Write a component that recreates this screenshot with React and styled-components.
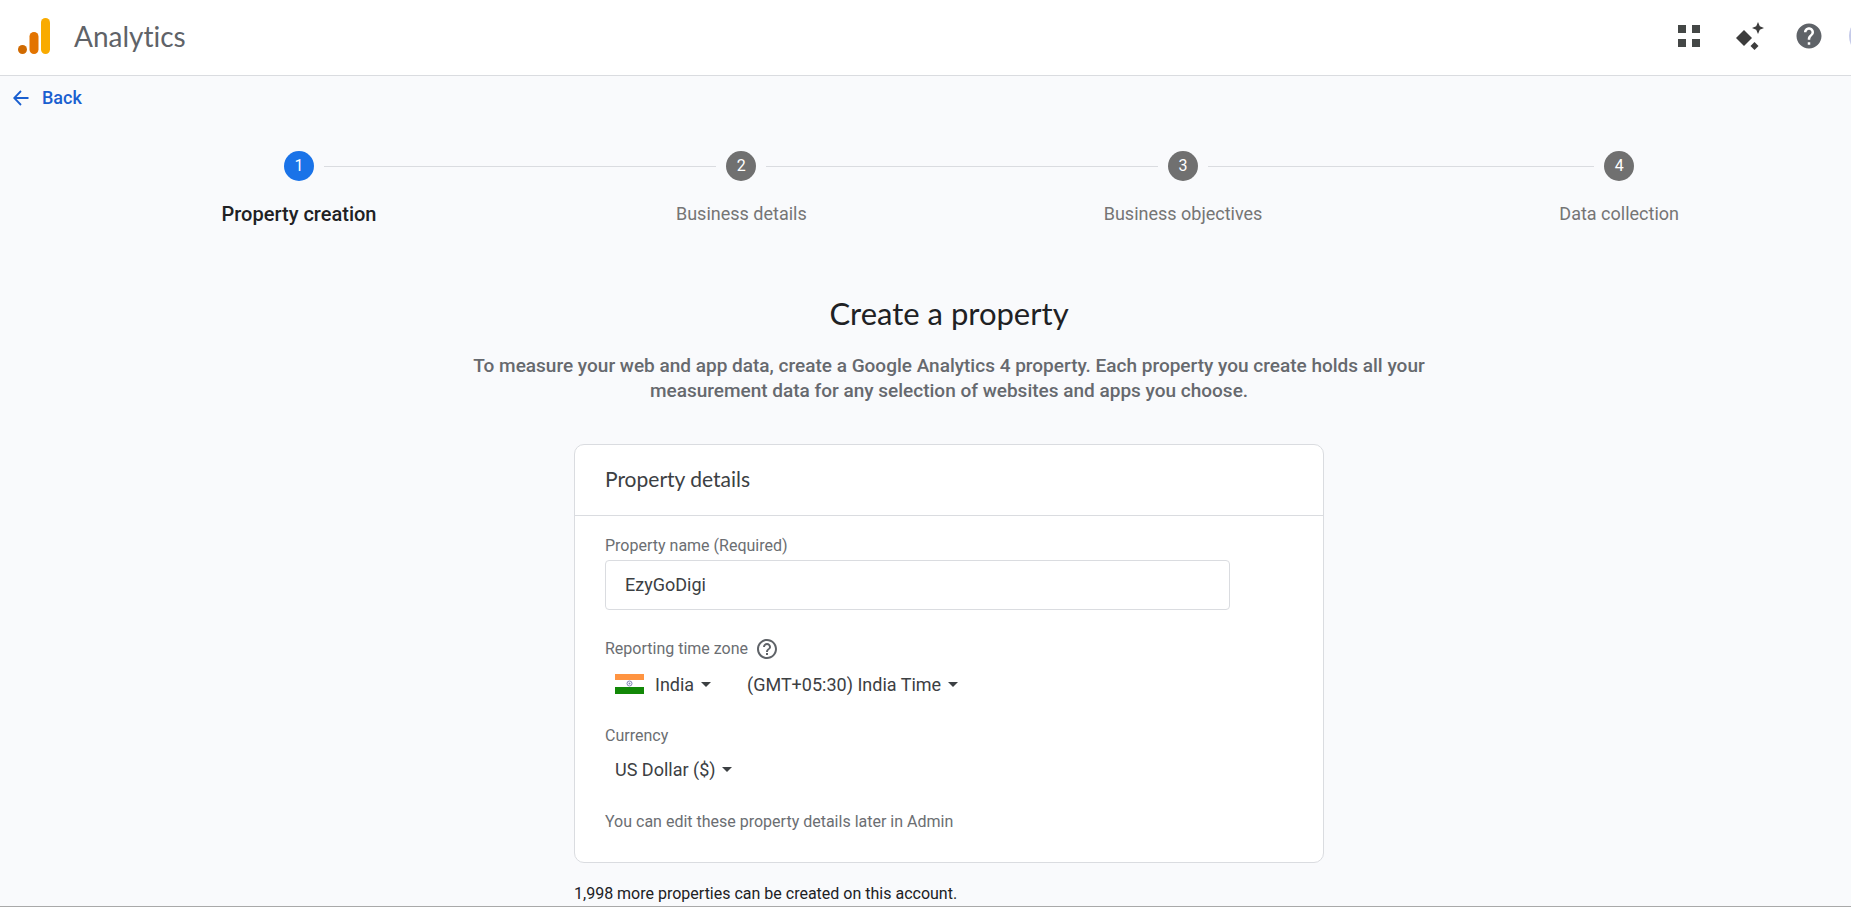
import React, { useState } from 'react'
import styled, { createGlobalStyle } from 'styled-components'

const steps = [
  "Property creation",
  "Business details",
  "Business objectives",
  "Data collection",
]

function Header() {
  return (
    <Bar>
      <Logo viewBox="0 0 32 36" aria-hidden="true">
        <rect x="23" y="0" width="9" height="36" rx="4.5" fill="#f9ab00" />
        <rect x="11.5" y="14" width="9" height="22" rx="4.5" fill="#e37400" />
        <circle cx="4.5" cy="31.5" r="4.5" fill="#d06a00" />
      </Logo>
      <Product>Analytics</Product>

      <Actions>
        <IconButton aria-label="Apps">
          <svg width="28" height="28" viewBox="0 -3 28 28" fill="#444746">
            <path d="M0 0h8v8H0zM14 0h8v8h-8zM0 14h8v8H0zM14 14h8v8h-8z" />
          </svg>
        </IconButton>
        <IconButton aria-label="Insights">
          <svg width="28" height="28" viewBox="0 0 28 28" fill="#3c3c3c">
            <path d="M8 8l8 8-8 8-8-8z" />
            <path d="M22 0l1.800 4.200L28 6l-4.200 1.800L22 12l-1.800-4.200L16 6l4.200-1.800z" />
            <path d="M18.500 20l4 4-4 4-4-4z" />
          </svg>
        </IconButton>
        <IconButton aria-label="Help">
          <svg width="30" height="30" viewBox="0 0 24 24" fill="#5f6368">
            <path d="M12 2C6.480 2 2 6.480 2 12s4.480 10 10 10 10-4.480 10-10S17.520 2 12 2zm1 17h-2v-2h2v2zm2.070-7.750l-.9.920C13.450 12.900 13 13.500 13 15h-2v-.5c0-1.100.45-2.100 1.170-2.830l1.240-1.260c.37-.36.59-.86.59-1.410 0-1.100-.9-2-2-2s-2 .9-2 2H8c0-2.210 1.790-4 4-4s4 1.790 4 4c0 .88-.36 1.680-.93 2.250z" />
          </svg>
        </IconButton>
        <Avatar aria-label="Account" />
      </Actions>
    </Bar>
  )
}

function Caret() {
  return (
    <svg width="10" height="5" viewBox="0 0 10 5" fill="#3c4043" aria-hidden="true">
      <path d="M0 0h10L5 5z" />
    </svg>
  )
}

function Dropdown({ label, value }) {
  return (
    <Picker>
      <select aria-label={label} defaultValue={value}>
        <option>{value}</option>
      </select>
      <Caret />
    </Picker>
  )
}

function IndiaFlag() {
  return (
    <svg width="29" height="20" viewBox="0 0 29 20" aria-hidden="true">
      <path d="M0 0h29v6H0z" fill="#ff9441" />
      <path d="M0 6h29v7H0z" fill="#fff" />
      <path d="M0 13h29v7H0z" fill="#128807" />
      <circle cx="14.5" cy="9.5" r="2.5" fill="none" stroke="#8585b8" />
      <circle cx="14.5" cy="9.5" r="1" fill="#8585b8" />
    </svg>
  )
}

function App() {
  const [name, setName] = useState("EzyGoDigi")

  return (
    <Page>
      <GlobalStyle />
      <Header />

      <BackLink href="#">
        <svg width="16" height="16" viewBox="0 0 16 16" fill="none" stroke="#1a5fd0" strokeWidth="1.8" aria-hidden="true">
          <path d="M15.500 8H1.500M8 1 1.200 8 8 15" />
        </svg>
        Back
      </BackLink>

      <Main>
        <Stepper>
          {steps.map((step, i) => (
            <React.Fragment key={step}>
              {i > 0 && <Connector aria-hidden="true" />}
              <Step $active={i === 0}>
                <Marker $first={i === 0} $last={i === steps.length - 1}>
                  <Badge $active={i === 0}>{i + 1}</Badge>
                </Marker>
                <span>{step}</span>
              </Step>
            </React.Fragment>
          ))}
        </Stepper>

        <Title>Create a property</Title>
        <Intro>
          To measure your web and app data, create a Google Analytics 4 property. Each property you create holds all your measurement data for any selection of websites and apps you choose.
        </Intro>

        <Content>
          <Card>
            <CardHeader>Property details</CardHeader>
            <CardBody>
              <Label htmlFor="property-name">Property name (Required)</Label>
              <NameInput
                id="property-name"
                value={name}
                onChange={e => setName(e.target.value)}
              />

              <LabelRow>
                <Label as="span">Reporting time zone</Label>
                <IconButton aria-label="About the reporting time zone">
                  <svg width="24" height="24" viewBox="0 0 24 24" fill="#5f6368">
                    <path d="M11 18h2v-2h-2v2zm1-16C6.480 2 2 6.480 2 12s4.480 10 10 10 10-4.480 10-10S17.520 2 12 2zm0 18c-4.410 0-8-3.590-8-8s3.590-8 8-8 8 3.590 8 8-3.590 8-8 8zm0-14c-2.210 0-4 1.790-4 4h2c0-1.100.9-2 2-2s2 .9 2 2c0 2-3 1.750-3 5h2c0-2.250 3-2.500 3-5 0-2.210-1.790-4-4-4z" />
                  </svg>
                </IconButton>
              </LabelRow>
              <Pickers>
                <Country>
                  <IndiaFlag />
                  <Dropdown label="Country" value="India" />
                </Country>
                <Dropdown label="Time zone" value="(GMT+05:30) India Time" />
              </Pickers>

              <CurrencyLabel as="span">Currency</CurrencyLabel>
              <Pickers>
                <Dropdown label="Currency" value="US Dollar ($)" />
              </Pickers>

              <Hint>You can edit these property details later in Admin</Hint>
            </CardBody>
          </Card>
          <Remaining>1,998 more properties can be created on this account.</Remaining>
        </Content>
      </Main>
    </Page>
  )
}

export default App

const GlobalStyle = createGlobalStyle`
  * {
    box-sizing: border-box;
  }
  body {
    margin: 0;
    background: #f9fafc;
    color: #202124;
    font-family: Roboto, "Liberation Sans", sans-serif;
    font-size: 18px;
    font-variant-ligatures: none;
    overflow-x: hidden;
  }
  button, input, select {
    font: inherit;
    color: inherit;
  }
  button {
    display: flex;
    padding: 0;
    border: 0;
    background: none;
    cursor: pointer;
  }
`

const Page = styled.div`
  min-height: 100vh;
  border-bottom: 1px solid #a9a9a9;
  overflow: hidden;
`

const Bar = styled.header`
  display: flex;
  align-items: center;
  height: 76px;
  padding: 0 0 4px 18px;
  background: #fff;
  border-bottom: 1px solid #dadce0;
`

const Logo = styled.svg`
  width: 32px;
  height: 36px;
`

const Product = styled.div`
  margin-left: 24px;
  font-family: Lato, sans-serif;
  font-size: 28px;
  color: #5f6368;
`

const Actions = styled.div`
  display: flex;
  align-items: center;
  gap: 30px;
  margin-left: auto;
`

const IconButton = styled.button`
  flex: none;
`

const Avatar = styled.button`
  width: 40px;
  height: 40px;
  margin: 0 -38px 0 -5px;
  border-radius: 50%;
  background: #c5cae9;
`

const BackLink = styled.a`
  display: inline-flex;
  align-items: center;
  gap: 13px;
  padding: 10px 13px;
  line-height: 24px;
  font-weight: 500;
  color: #1a5fd0;
  text-decoration: none;
`

const Main = styled.main`
  padding: 31px 0 0 47px;
`

const Stepper = styled.ol`
  display: flex;
  max-width: 1460px;
  margin: 0 auto;
  padding: 0;
  list-style: none;
`

const Step = styled.li`
  display: flex;
  flex-direction: column;
  gap: 21px;
  min-width: ${props => props.$active ? '160px' : '0'};
  font-size: ${props => props.$active ? '20px' : '18px'};
  line-height: 24px;
  font-weight: ${props => props.$active ? 500 : 400};
  text-align: center;
  color: ${props => props.$active ? '#202124' : '#757575'};
`

const Marker = styled.div`
  display: flex;
  align-items: center;
  gap: 10px;

  &::before, &::after {
    content: "";
    flex: 1;
    height: 1px;
    background: #dadce0;
  }
  &::before {
    visibility: ${props => props.$first ? 'hidden' : 'visible'};
  }
  &::after {
    visibility: ${props => props.$last ? 'hidden' : 'visible'};
  }
`

const Connector = styled.li`
  flex: 1;
  height: 1px;
  margin-top: 15px;
  background: #dadce0;
`

const Badge = styled.div`
  display: flex;
  justify-content: center;
  align-items: center;
  width: 30px;
  height: 30px;
  border-radius: 50%;
  background: ${props => props.$active ? '#1a73e8' : '#707070'};
  color: #fff;
  font-size: 16px;
  font-weight: 400;
`

const Title = styled.h1`
  margin: 67px 0 0;
  font-family: Lato, sans-serif;
  font-size: 31px;
  line-height: 40px;
  font-weight: 400;
  text-align: center;
`

const Intro = styled.p`
  max-width: 1000px;
  margin: 20px auto 0;
  font-size: 19px;
  line-height: 25px;
  font-weight: 500;
  text-align: center;
  color: #66696e;
`

const Content = styled.div`
  max-width: 750px;
  margin: 41px auto 0;
`

const Card = styled.section`
  background: #fff;
  border: 1px solid #dadce0;
  border-radius: 10px;
`

const CardHeader = styled.h2`
  margin: 0;
  padding: 22px 30px 24px;
  border-bottom: 1px solid #dadce0;
  font-family: Lato, sans-serif;
  font-size: 21px;
  line-height: 24px;
  font-weight: 400;
  color: #3c4043;
`

const CardBody = styled.div`
  padding: 20px 30px 30px;
`

const Label = styled.label`
  display: block;
  font-size: 16px;
  line-height: 20px;
  color: #6b6e72;
`

const NameInput = styled.input`
  display: block;
  width: 625px;
  max-width: 100%;
  height: 50px;
  margin-top: 4px;
  padding: 0 19px 2px;
  border: 1px solid #dadce0;
  border-radius: 4px;
  background: #fff;
  color: #3c4043;
  outline: none;
`

const LabelRow = styled.div`
  display: flex;
  align-items: center;
  gap: 7px;
  margin-top: 27px;
`

const Pickers = styled.div`
  display: flex;
  align-items: center;
  gap: 36px;
  padding: 11px 10px 0;
`

const Country = styled.div`
  display: flex;
  align-items: center;
  gap: 11px;
`

const Picker = styled.div`
  display: flex;
  align-items: center;
  gap: 6px;
  color: #3c4043;

  select {
    appearance: none;
    height: 24px;
    padding: 0;
    border: 0;
    background: none;
    cursor: pointer;
  }
`

const CurrencyLabel = styled(Label)`
  margin-top: 30px;
`

const Hint = styled.p`
  margin: 31px 0 0;
  font-size: 16px;
  line-height: 20px;
  color: #6b6e72;
`

const Remaining = styled.p`
  margin: 20px 0 0;
  font-size: 16px;
  line-height: 22px;
`
